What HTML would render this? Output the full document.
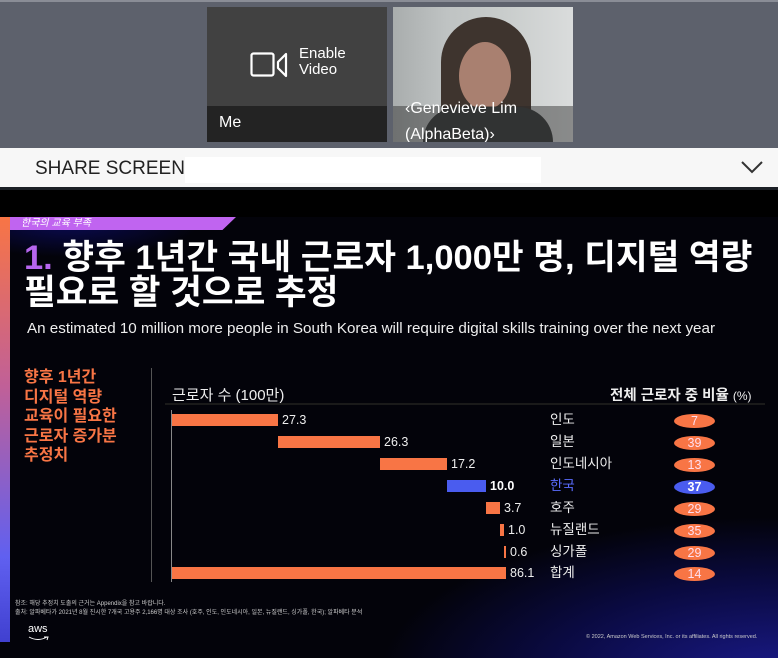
<!DOCTYPE html>
<html><head><meta charset="utf-8"><style>
*{margin:0;padding:0;box-sizing:border-box}
html{width:778px;height:658px;overflow:hidden}
body{width:778px;height:658px;overflow:hidden;background:#000;font-family:"Liberation Sans","Noto Sans CJK KR",sans-serif;position:relative}
.a{position:absolute}
.t{font-family:"Liberation Sans","Noto Sans CJK KR",sans-serif;white-space:nowrap}
.bar{position:absolute;height:12px;background:#f87545}
.num{position:absolute;color:#eee;font-size:12.5px;line-height:12px}
.lab{position:absolute;left:550px;color:#eee;font-size:13.5px;line-height:14px}
.pill{position:absolute;left:674px;width:41px;height:14px;border-radius:50%;background:#f87545;color:#fde;font-size:12.5px;line-height:14px;text-align:center}
</style></head><body>
<div class="a" style="left:0;top:0;width:778px;height:148px;background:#5d616c;border-top:2px solid #8a8d96"></div>
<div class="a" style="left:207px;top:7px;width:180px;height:135px;background:#414141"></div>
<div class="a" style="left:207px;top:106px;width:180px;height:36px;background:#232323"></div>
<div class="a t" style="left:219px;top:114px;color:#fff;font-size:16px">Me</div>
<svg class="a" style="left:250px;top:52px" width="38" height="26"><rect x="1.5" y="1.5" width="22" height="22" rx="2" fill="none" stroke="#fff" stroke-width="2.2"/><path d="M36 2 L28 10 L28 16 L36 24 Z" fill="none" stroke="#fff" stroke-width="2.2" stroke-linejoin="round"/></svg>
<div class="a t" style="left:299px;top:46px;color:#fff;font-size:15px;line-height:16px">Enable<br>Video</div>
<div class="a" style="left:393px;top:7px;width:180px;height:135px;overflow:hidden;background:linear-gradient(90deg,#a9adad 0%,#bfc3c3 30%,#c8cccb 60%,#dadcdc 100%)">
 <div class="a" style="left:48px;top:10px;width:90px;height:125px;border-radius:45px 45px 10px 10px;background:#3e342e"></div>
 <div class="a" style="left:66px;top:35px;width:52px;height:68px;border-radius:50%;background:#a98070"></div>
 <div class="a" style="left:30px;top:100px;width:130px;height:35px;border-radius:40px 40px 0 0;background:#3a3c3c"></div>
</div>
<div class="a" style="left:393px;top:106px;width:180px;height:36px;background:rgba(40,40,40,.45)"></div>
<div class="a" style="left:393px;top:96px;width:180px;height:46px;overflow:hidden"><div class="t" style="position:absolute;left:12px;top:0;color:#fff;font-size:16px;line-height:26px">‹Genevieve Lim<br>(AlphaBeta)›</div></div>
<div class="a" style="left:0;top:148px;width:778px;height:39px;background:#f7f7f7"></div>
<div class="a" style="left:185px;top:157px;width:356px;height:26px;background:#fff"></div>
<div class="a t" style="left:35px;top:158px;color:#222;font-size:19px">SHARE SCREEN</div>
<svg class="a" style="left:740px;top:160px" width="24" height="16"><path d="M2 2 L12 12 L22 2" fill="none" stroke="#333" stroke-width="2"/></svg>
<div class="a" style="left:0;top:187px;width:778px;height:3px;background:#1c2026"></div>
<div class="a" style="left:0;top:217px;width:778px;height:441px;background:radial-gradient(ellipse 400px 160px at 780px 460px,#1a1a8a 0%,#0a0a40 60%,rgba(3,3,10,0) 100%),radial-gradient(ellipse 130px 35px at 70px 5px,#0a0a55,rgba(3,3,10,0)),#03030a"></div>
<div class="a" style="left:0;top:217px;width:10px;height:425px;background:linear-gradient(#f87545 0%,#c06098 40%,#6060f0 80%,#4040d0 100%)"></div>
<div class="a" style="left:10px;top:217px;width:226px;height:13px;background:#c064f0;clip-path:polygon(0 0,100% 0,94% 100%,0 100%)"></div>
<div class="a t" style="left:21px;top:217px;color:#fff;font-size:10px;line-height:13px;font-style:italic">한국의 교육 부족</div>
<div class="a t" style="left:24px;top:241px;color:#fff;font-size:34.5px;font-weight:bold;line-height:35px"><span style="color:#b766ee">1.</span> 향후 1년간 국내 근로자 1,000만 명, 디지털 역량<br>필요로 할 것으로 추정</div>
<div class="a t" style="left:27px;top:320px;color:#eee;font-size:15.2px">An estimated 10 million more people in South Korea will require digital skills training over the next year</div>
<div class="a t" style="left:24px;top:368px;color:#f87545;font-size:16px;font-weight:bold;line-height:19.5px">향후 1년간<br>디지털 역량<br>교육이 필요한<br>근로자 증가분<br>추정치</div>
<div class="a" style="left:151px;top:368px;width:1px;height:214px;background:#555"></div>
<div class="a t" style="left:172px;top:384px;color:#eee;font-size:15px">근로자 수 (100만)</div>
<div class="a t" style="left:610px;top:384px;color:#eee;font-size:14.5px;font-weight:bold">전체 근로자 중 비율 <span style="font-weight:normal;font-size:12px">(%)</span></div>
<div class="a" style="left:165px;top:403px;width:600px;height:2px;background:#1a1a1a"></div>
<div class="a" style="left:171px;top:410px;width:1px;height:172px;background:#888"></div>
<div class="bar" style="left:172px;top:414px;width:106px"></div>
<div class="bar" style="left:278px;top:436px;width:102px"></div>
<div class="bar" style="left:380px;top:458px;width:67px"></div>
<div class="bar" style="left:447px;top:480px;width:39px;background:#4a5cef"></div>
<div class="bar" style="left:486px;top:502px;width:14px"></div>
<div class="bar" style="left:500px;top:524px;width:4px"></div>
<div class="bar" style="left:504px;top:546px;width:2px"></div>
<div class="bar" style="left:172px;top:567px;width:334px"></div>
<div class="num" style="left:282px;top:414px">27.3</div>
<div class="num" style="left:384px;top:436px">26.3</div>
<div class="num" style="left:451px;top:458px">17.2</div>
<div class="num" style="left:490px;top:480px;font-weight:bold;color:#fff">10.0</div>
<div class="num" style="left:504px;top:502px">3.7</div>
<div class="num" style="left:508px;top:524px">1.0</div>
<div class="num" style="left:510px;top:546px">0.6</div>
<div class="num" style="left:510px;top:567px">86.1</div>
<div class="lab" style="top:413px">인도</div>
<div class="lab" style="top:435px">일본</div>
<div class="lab" style="top:457px">인도네시아</div>
<div class="lab" style="top:479px;color:#5a6cff">한국</div>
<div class="lab" style="top:501px">호주</div>
<div class="lab" style="top:523px">뉴질랜드</div>
<div class="lab" style="top:545px">싱가폴</div>
<div class="lab" style="top:566px">합계</div>
<div class="pill" style="top:414px">7</div>
<div class="pill" style="top:436px">39</div>
<div class="pill" style="top:458px">13</div>
<div class="pill" style="top:480px;background:#4a5cef;color:#fff;font-weight:bold">37</div>
<div class="pill" style="top:502px">29</div>
<div class="pill" style="top:524px">35</div>
<div class="pill" style="top:546px">29</div>
<div class="pill" style="top:567px">14</div>
<div class="a t" style="left:15px;top:600px;color:#ccc;font-size:6px;line-height:9px">참조: 해당 추정치 도출의 근거는 Appendix을 참고 바랍니다.<br>출처: 알파베타가 2021년 8월 진시한 7개국 고용주 2,166명 대상 조사 (호주, 인도, 인도네시아, 일본, 뉴질랜드, 싱가폴, 한국); 알파베타 분석</div>
<div class="a t" style="left:28px;top:624px;color:#fff;font-size:11px;line-height:11px">aws</div>
<svg class="a" style="left:28px;top:636px" width="22" height="6"><path d="M1 1 Q10 6 19 1 M16 1 L20 1 L19 4" fill="none" stroke="#fff" stroke-width="1"/></svg>
<div class="a t" style="left:586px;top:634px;color:#ccc;font-size:5.5px">© 2022, Amazon Web Services, Inc. or its affiliates. All rights reserved.</div>
</body></html>
